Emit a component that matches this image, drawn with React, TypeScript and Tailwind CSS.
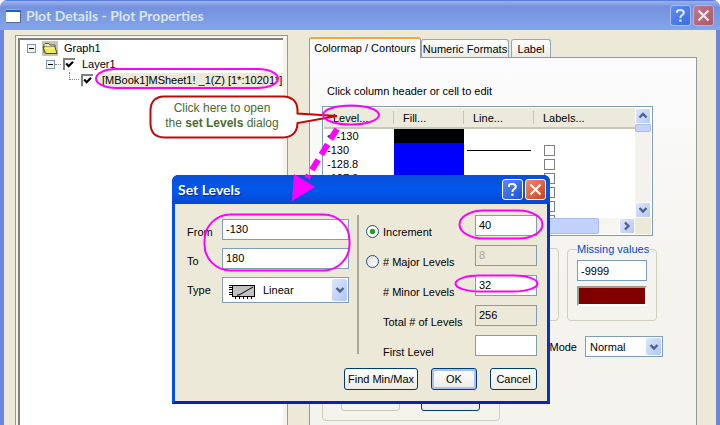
import React from 'react';

type TitleBarProps = { title: string; active?: boolean };

function CaptionButton({ kind, active }: { kind: 'help' | 'close'; active?: boolean }) {
  const color =
    kind === 'help'
      ? active
        ? 'bg-linear-to-br from-[#5a8af0] to-[#1c50d8] border-white'
        : 'bg-linear-to-br from-[#5c8cf0] to-[#3c6ce4] border-[#a9bdf0]'
      : active
        ? 'bg-linear-to-br from-[#f08a6c] to-[#d03a10] border-white'
        : 'bg-linear-to-br from-[#c0788c] to-[#a85a68] border-[#c9a9cf]';
  return (
    <button
      type="button"
      aria-label={kind === 'help' ? 'Help' : 'Close'}
      className={'flex h-[21px] w-[21px] items-center justify-center rounded-[3px] border ' + color}
    >
      {kind === 'help' ? (
        <svg width="13" height="15" viewBox="0 0 13 15" fill="none" stroke={active ? '#fff' : '#e4ecff'} strokeWidth="2">
          <path d="M3 5 V3.6 Q3.4 2 6.2 2 Q9.8 2 9.8 4.8 Q9.8 6.4 8 7.2 Q6.4 8 6.4 10" />
          <path d="M6.4 11.6 V13.8" strokeWidth="2.4" />
        </svg>
      ) : (
        <svg width="13" height="13" viewBox="0 0 13 13" stroke={active ? '#fff' : '#f4e8f0'} strokeWidth="2.2">
          <path d="M1.5 1.5 L11.5 11.5 M11.5 1.5 L1.5 11.5" />
        </svg>
      )}
    </button>
  );
}

function TitleBar({ title, active }: TitleBarProps) {
  return (
    <header
      className={
        active
          ? 'flex h-[29px] items-center justify-between rounded-t-[6px] bg-linear-to-b from-[#0a4fd6] via-[#0058ee] to-[#0548d0] pr-1 pl-[6px]'
          : 'flex h-[29px] items-center justify-between bg-linear-to-b from-[#93ade9] from-5% via-[#7490de] via-20% to-[#83a6ec] px-[6px]'
      }
    >
      <div className="flex items-center gap-[5px]">
        {!active && (
          <svg width="15" height="14" viewBox="0 0 15 14" shapeRendering="crispEdges">
            <rect width="15" height="14" fill="#fff" />
            <rect width="15" height="3" fill="#1f62c4" />
            <rect x="0" y="0" width="15" height="1" fill="#7db4f4" />
            <path d="M14.5 3 V14 M0 13.5 H15" stroke="#5a6a90" />
          </svg>
        )}
        <h1
          className={
            'font-[Lato,sans-serif] text-[14px] leading-4 font-bold ' +
            (active ? 'text-white [text-shadow:1px_1px_0_#0a2a8c]' : 'text-[#d8e4f8]')
          }
        >
          {title}
        </h1>
      </div>
      <div className="flex gap-[2px]">
        <CaptionButton kind="help" active={active} />
        <CaptionButton kind="close" active={active} />
      </div>
    </header>
  );
}

function Expander() {
  return (
    <svg width="9" height="9" viewBox="0 0 9 9" shapeRendering="crispEdges">
      <rect x="0.5" y="0.5" width="8" height="8" fill="#f4f2ea" stroke="#7898b5" />
      <path d="M2 4.5 H7" stroke="#000" />
    </svg>
  );
}

function TreeCheck({ label }: { label: string }) {
  return (
    <span className="relative block h-3 w-3">
      <input
        type="checkbox"
        defaultChecked
        aria-label={label}
        className="block h-3 w-3 appearance-none border-t-2 border-l-2 border-[#808080] bg-white"
      />
      <svg className="pointer-events-none absolute top-[2px] left-[2px]" width="9" height="9" viewBox="0 0 9 9">
        <path d="M1.2 3.6 L3.6 6.2 L8 1.8" fill="none" stroke="#000" strokeWidth="2.2" />
      </svg>
    </span>
  );
}

function Chevron({ dir }: { dir: 'up' | 'down' | 'right' }) {
  const d =
    dir === 'up' ? 'M1.5 6.5 L5 3 L8.5 6.5' : dir === 'down' ? 'M1.5 3 L5 6.5 L8.5 3' : 'M3 1.5 L6.5 5 L3 8.5';
  return (
    <svg width="10" height="10" viewBox="0 0 10 10">
      <path d={d} fill="none" stroke="#4d6185" strokeWidth="2.4" />
    </svg>
  );
}

function ScrollButton({ dir }: { dir: 'up' | 'down' | 'right' }) {
  return (
    <button
      type="button"
      aria-label={'Scroll ' + dir}
      className="flex h-4 w-4 shrink-0 items-center justify-center rounded-[2px] border border-white bg-linear-to-br from-[#dce6fe] to-[#b4c8f8]"
    >
      <Chevron dir={dir} />
    </button>
  );
}

function Combo({ id, value, className, tall }: { id: string; value: string; className: string; tall?: boolean }) {
  return (
    <span className={'relative block ' + className}>
      <select
        id={id}
        defaultValue={value}
        className={
          'block h-full w-full appearance-none border border-[#7f9db9] bg-white text-black outline-none ' +
          (tall ? 'pl-10' : 'pl-1')
        }
      >
        <option>{value}</option>
      </select>
      <span className="pointer-events-none absolute inset-y-[2px] right-[2px] flex w-[15px] items-center justify-center rounded-[2px] bg-linear-to-br from-[#dce6fe] to-[#b0c6f8]">
        <Chevron dir="down" />
      </span>
    </span>
  );
}

const levels = ['< -130', '-130', '-128.8', '-127.6', '-126.4', '-125.2', '-124'];

function LevelTable() {
  return (
    <div className="mr-[43px] flex h-[130px] flex-col border border-[#7f9db9] bg-white p-px">
      <div className="flex min-h-0 flex-1">
        <div className="min-w-0 flex-1 overflow-hidden">
          <table className="w-full table-fixed border-collapse text-left">
            <thead>
              <tr className="h-5 border-b-2 border-[#cbc7b8] bg-[#ebeadb]">
                {['Level...', 'Fill...', 'Line...', 'Labels...'].map((name, i) => (
                  <th key={name} className={'p-0 font-normal ' + (i < 3 ? 'w-[70px]' : '')}>
                    <div
                      className={
                        'h-[13px] pl-[9px] leading-[15px] ' +
                        (i < 3 ? 'border-r border-[#c7c5b2]' : '')
                      }
                    >
                      {name}
                    </div>
                  </th>
                ))}
              </tr>
            </thead>
            <tbody>
              {levels.map((level, i) => (
                <tr key={level} className="h-[14px]">
                  <td className="p-0 pl-[3px] leading-[14px]">{level}</td>
                  <td className={'p-0 ' + (i === 0 ? 'bg-black' : 'bg-[#0000ff]')} />
                  <td className="p-0 px-[3px]">{i === 1 && <div className="h-px bg-black" />}</td>
                  <td className="p-0 pl-[10px]">
                    {i > 0 && (
                      <input
                        type="checkbox"
                        aria-label={'Label ' + level}
                        className="block h-[11px] w-[11px] appearance-none border border-[#808080] bg-white"
                      />
                    )}
                  </td>
                </tr>
              ))}
            </tbody>
          </table>
        </div>
        <div className="flex w-4 flex-col justify-between bg-[#f3f2ec]">
          <div>
            <ScrollButton dir="up" />
            <div className="h-2 rounded-[2px] border border-[#a8bcf0] bg-[#c4d4fc]" />
          </div>
          <ScrollButton dir="down" />
        </div>
      </div>
      <div className="flex h-4 bg-[#ece9d8]">
        <div className="flex flex-1 bg-[#f6f5f0]">
          <div className="mr-5 flex-1 rounded-[2px] border border-[#a8bcf0] bg-[#c2d2fc]" />
          <ScrollButton dir="right" />
        </div>
        <div className="w-4" />
      </div>
    </div>
  );
}

function PlotDetails() {
  return (
    <main className="flex h-full flex-col overflow-hidden rounded-t-[7px] bg-[#ece9d8]">
      <div className="border-t border-[#5c7cd8] bg-[#6f8fe0]">
        <TitleBar title="Plot Details - Plot Properties" />
      </div>
      <div className="flex min-h-0 flex-1 gap-[21px] border-x-4 border-[#6f84dc] pr-[19px] pl-[11px]">
        <section className="mt-[5px] w-[273px] shrink-0 border border-b-0 border-[#7f9db9] bg-[#f6f4ea] pt-[2px] pr-1 pl-[2px]">
          <ul className="h-full border-t-2 border-l-2 border-[#808078] bg-white whitespace-nowrap">
            <li className="flex h-4 items-center pl-[7px]">
              <Expander />
              <svg className="ml-[6px]" width="16" height="15" viewBox="0 0 16 15">
                <rect width="16" height="15" fill="#c8c4b8" />
                <path d="M2 12 V3.5 L3 2.5 H7 L8 4 H13 V6" fill="#f4f0a0" stroke="#555" />
                <path d="M1 6 H13 L15 12.5 H3.5 Z" fill="#f0ec50" stroke="#444" />
                <path d="M3 6.8 H12.6" stroke="#fff" />
              </svg>
              <span className="ml-[6px]">Graph1</span>
            </li>
            <li className="flex h-4 items-center pl-[26px]">
              <Expander />
              <span className="mr-[2px] w-[6px] border-t border-dotted border-[#808080]" />
              <TreeCheck label="Layer1 visible" />
              <span className="ml-[7px]">Layer1</span>
            </li>
            <li className="flex h-4 items-center pl-[49px]">
              <span className="mr-[2px] mb-2 h-2 w-[10px] shrink-0 border-b border-l border-dotted border-[#808080]" />
              <TreeCheck label="Plot visible" />
              <span className="ml-[7px] bg-[#ece9d8] px-[2px] leading-[14px]">[MBook1]MSheet1! _1(Z) [1*:10201*]</span>
            </li>
          </ul>
        </section>

        <section className="flex min-w-0 flex-1 flex-col pt-[7px]">
          <div role="tablist" className="flex h-5 items-end whitespace-nowrap">
            <button
              type="button"
              role="tab"
              aria-selected="true"
              className="z-1 -mb-px h-[21px] w-28 rounded-t-[3px] border-x border-t-2 border-x-[#919b9c] border-t-[#f4a830] bg-[#fcfcfe] pb-px"
            >
              Colormap / Contours
            </button>
            <button
              type="button"
              role="tab"
              aria-selected="false"
              className="mr-[2px] h-[18px] w-[88px] rounded-t-[3px] border border-b-0 border-[#91a7b4] bg-linear-to-b from-white to-[#ecebe6]"
            >
              Numeric Formats
            </button>
            <button
              type="button"
              role="tab"
              aria-selected="false"
              className="h-[18px] w-10 rounded-t-[3px] border border-b-0 border-[#91a7b4] bg-linear-to-b from-white to-[#ecebe6]"
            >
              Label
            </button>
          </div>
          <div className="flex-1 overflow-hidden border border-b-0 border-[#919b9c] bg-linear-to-b from-[#fcfcfe] to-[#f4f3ee] to-60% pl-3">
            <p className="mt-[26px] mb-2 pl-[5px] leading-[14px]">Click column header or cell to edit</p>
            <LevelTable />
            <div className="mt-[6px] mr-[39px] flex gap-2">
              <fieldset className="mt-[6px] flex-1 rounded-[4px] border border-[#d0d0bf]" />
              <fieldset className="h-[79px] w-[90px] min-w-0 rounded-[4px] border border-[#d0d0bf] px-[9px]">
                <legend className="leading-[14px] whitespace-nowrap text-[#0046d5]">Missing values</legend>
                <input
                  aria-label="Missing values"
                  defaultValue="-9999"
                  className="mt-1 block h-[21px] w-full border border-[#7f9db9] bg-white px-[3px]"
                />
                <button
                  type="button"
                  aria-label="Missing value colour"
                  className="mt-[5px] block h-5 w-full border-2 border-t-[#a09c8c] border-r-white border-b-white border-l-[#a09c8c] bg-[#800000]"
                />
              </fieldset>
            </div>
            <div className="mt-[15px] mr-[33px] flex h-[21px] items-center justify-end gap-2">
              <label htmlFor="mode">Mode</label>
              <Combo id="mode" value="Normal" className="h-[21px] w-[78px]" />
            </div>
            <div className="mt-[9px] flex h-[55px] w-[178px] items-end gap-[21px] rounded-[4px] border border-[#d0d0bf] pb-[9px] pl-[18px]">
              <button type="button" disabled className="h-[22px] w-[59px] rounded-[3px] border border-[#c9c7ba] bg-[#f5f4ea] text-[#a8a69a]">
                Save
              </button>
              <button type="button" className="h-[22px] w-[59px] rounded-[3px] border border-[#003c74] bg-linear-to-b from-white to-[#ecebe5]">
                Load...
              </button>
            </div>
          </div>
        </section>
      </div>
    </main>
  );
}

const fieldClass = 'block h-[21px] w-full border border-[#7f9db9] px-[3px] pb-[2px] ';
const buttonClass = 'h-[22px] rounded-[3px] border border-[#003c74] bg-linear-to-b from-white to-[#ecebe5] whitespace-nowrap ';

function Radio({ id, label, checked }: { id: string; label: string; checked?: boolean }) {
  return (
    <input
      id={id}
      type="radio"
      name="step"
      aria-label={label}
      defaultChecked={checked}
      className="block h-[13px] w-[13px] appearance-none rounded-full border border-[#1d5281] bg-linear-to-br from-[#dcdcd7] to-white checked:bg-radial checked:from-[#21a121] checked:from-30% checked:to-white checked:to-40%"
    />
  );
}

function SetLevels() {
  const rows = [
    { id: 'increment', label: 'Increment', value: '40', radio: true, checked: true, disabled: false, readOnly: false },
    { id: 'major', label: '# Major Levels', value: '8', radio: true, checked: false, disabled: true, readOnly: false },
    { id: 'minor', label: '# Minor Levels', value: '32', radio: false, checked: false, disabled: false, readOnly: false },
    { id: 'total', label: 'Total # of Levels', value: '256', radio: false, checked: false, disabled: false, readOnly: true },
    { id: 'first', label: 'First Level', value: '', radio: false, checked: false, disabled: false, readOnly: false },
  ];
  return (
    <div
      role="dialog"
      aria-label="Set Levels"
      className="absolute top-[175px] left-[172px] flex h-[229px] w-[378px] flex-col rounded-t-[7px] border-3 border-t-0 border-t-[#0a4fd6] border-r-[#0831c8] border-b-[#0a22b0] border-l-[#0050e8] bg-[#ece9d8]"
    >
      <div className="-mx-[3px] rounded-t-[7px] bg-[#0a4fd6]">
        <TitleBar title="Set Levels" active />
      </div>
      <div className="flex h-[164px] pr-[10px] pl-3">
        <div className="grid w-[162px] grid-cols-[35px_1fr] content-start gap-y-2 pt-[15px]">
          <label htmlFor="from" className="pt-[5px] leading-4">From</label>
          <input id="from" defaultValue="-130" className={fieldClass + 'bg-white'} />
          <label htmlFor="to" className="pt-[5px] leading-4">To</label>
          <input id="to" defaultValue="180" className={fieldClass + 'bg-white'} />
          <label htmlFor="type" className="pt-[5px] leading-4">Type</label>
          <div className="relative">
            <Combo id="type" value="Linear" className="h-[26px] w-full" tall />
            <svg className="pointer-events-none absolute top-[7px] left-[6px]" width="28" height="16" viewBox="0 0 28 16" shapeRendering="crispEdges">
              <rect x="4.5" y="1.5" width="22" height="11" fill="#c0c0c0" stroke="#000" />
              <path d="M1 1.5 H4 M1 3.5 H4 M1 5.5 H4 M1 8.5 H4 M1 10.5 H4 M7.5 13 V15 M11.5 13 V15 M15.5 13 V15 M19.5 13 V15 M23.5 13 V15" stroke="#000" />
              <path d="M9 11 H11 L25 3" fill="none" stroke="#000" shapeRendering="auto" />
            </svg>
          </div>
        </div>
        <div className="mt-[11px] ml-2 h-[139px] w-[2px] bg-[#aca899]" />
        <div className="ml-[7px] flex flex-1 flex-col gap-[9px] pt-[11px]">
          {rows.map((row) => (
            <div key={row.id} className="grid h-[21px] grid-cols-[17px_1fr_62px]">
              <span className="pt-[10px]">{row.radio && <Radio id={'use-' + row.id} label={row.label} checked={row.checked} />}</span>
              <label htmlFor={row.id} className="pt-[9px] leading-4 whitespace-nowrap">
                {row.label}
              </label>
              <input
                id={row.id}
                defaultValue={row.value}
                disabled={row.disabled}
                readOnly={row.readOnly}
                className={
                  fieldClass +
                  (row.disabled ? 'bg-[#ece9d8] text-[#aca899]' : row.readOnly ? 'bg-[#ece9d8]' : 'bg-white')
                }
              />
            </div>
          ))}
        </div>
      </div>
      <div className="flex justify-end gap-[13px] pr-[10px]">
        <button type="button" className={buttonClass + 'w-[74px]'}>Find Min/Max</button>
        <button type="button" className={buttonClass + 'w-[46px] shadow-[inset_0_0_0_2px_#a8c0f4]'}>OK</button>
        <button type="button" className={buttonClass + 'w-[47px]'}>Cancel</button>
      </div>
    </div>
  );
}

function Annotations() {
  return (
    <div className="pointer-events-none absolute inset-0">
      <svg className="absolute top-0 left-0" width="720" height="425" viewBox="0 0 720 425" fill="none">
        <path
          d="M164 96.500 H283 Q297 97 297.500 110 V113.500 L337 116 L297.500 123 Q297 137 283 137.500 H164 Q151 137 150.500 124 V110 Q151 97 164 96.500 Z"
          fill="#fff"
          stroke="#c00808"
          strokeWidth="2"
        />
        <g stroke="#ff00ff" strokeWidth="2">
          <rect x="96" y="69" width="182" height="19" rx="20" ry="9.5" />
          <ellipse cx="351" cy="115" rx="28" ry="9.5" />
          <rect x="204.500" y="214.500" width="145" height="56" rx="26" />
          <rect x="459.500" y="210.500" width="83" height="28" rx="24" ry="14" />
          <rect x="455.500" y="275.500" width="82" height="16" rx="24" ry="8" />
        </g>
        <path d="M337 129 L307 178" stroke="#ff00ff" strokeWidth="6" strokeDasharray="12 6" />
        <path d="M294 174 L315 187 L292 201 Z" fill="#ff00ff" />
      </svg>
      <p className="absolute top-[101px] left-[151px] w-[142px] text-center font-['Liberation_Sans',sans-serif] text-[12px] leading-[15px] whitespace-nowrap text-[#4a6b30]">
        Click here to open
        <br />
        the <b>set Levels</b> dialog
      </p>
    </div>
  );
}

export default function App() {
  return (
    <div className="relative h-screen overflow-hidden bg-white font-['Liberation_Sans',sans-serif] text-[11px] leading-[14px] text-black">
      <PlotDetails />
      <SetLevels />
      <Annotations />
    </div>
  );
}
